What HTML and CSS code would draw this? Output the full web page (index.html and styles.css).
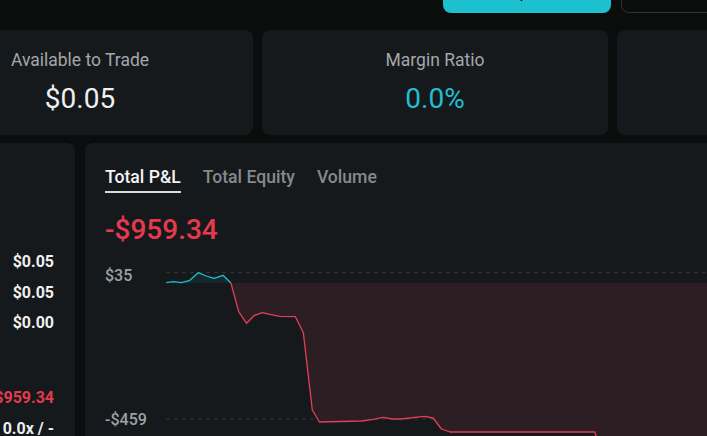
FILE: index.html
```html
<!DOCTYPE html>
<html lang="en">

<head>
    <meta charset="UTF-8">
    <meta name="viewport" content="width=device-width, initial-scale=1.0">
    <title>Portfolio</title>
    <link rel="stylesheet" href="styles.css">
</head>

<body>
    <div class="page">
        <header class="topbar">
            <button class="btn btn-primary">Deposit</button>
            <button class="btn btn-outline">Withdraw</button>
        </header>

        <section class="stats">
            <div class="stat">
                <div class="stat-label">Available to Trade</div>
                <div class="stat-value">$0.05</div>
            </div>
            <div class="stat">
                <div class="stat-label">Margin Ratio</div>
                <div class="stat-value teal">0.0%</div>
            </div>
            <div class="stat">
                <div class="stat-label">Leverage</div>
                <div class="stat-value">0.0x</div>
            </div>
        </section>

        <section class="main">
            <aside class="summary">
                <div class="summary-title">Account</div>
                <div class="row"><span>Equity</span><b>$0.05</b></div>
                <div class="row"><span>Balance</span><b>$0.05</b></div>
                <div class="row"><span>Margin</span><b>$0.00</b></div>
                <div class="summary-sub">Positions</div>
                <div class="row"><span>PnL</span><b class="red">-$959.34</b></div>
                <div class="row"><span>Lev.</span><b>0.0x / -</b></div>
            </aside>

            <div class="chart-card">
                <nav class="tabs">
                    <span class="tab active">Total P&amp;L</span>
                    <span class="tab">Total Equity</span>
                    <span class="tab">Volume</span>
                </nav>
                <div class="pnl red">-$959.34</div>

                <svg class="chart" width="620" height="200" viewBox="0 0 620 200">
                    <!-- grid -->
                    <line class="grid" x1="61" y1="22.7" x2="620" y2="22.7" />
                    <line class="grid" x1="61" y1="169" x2="620" y2="169" />
                    <text class="axis" x="0" y="30.5">$35</text>
                    <text class="axis" x="0" y="174.5">-$459</text>

                    <!-- fills -->
                    <polygon class="fill-up"
                        points="61.3,33 68.4,31.7 76.3,32.7 84.2,30.7 93.2,22.7 101.1,26 109,28.3 118,25.3 125.9,33" />
                    <polygon class="fill-down"
                        points="125.9,33 133.7,61.7 141.6,73.3 149.5,65.3 157.4,62.7 166,64.7 174.7,66.3 190.4,66.7 198.3,82.7 207.3,160 214.4,172 256.5,171 268.3,169.3 278.2,167.3 287.2,169 295.9,169 319.5,166.3 328.1,168 336.4,179 345,182 489.9,182 491,186 493,240 620,240 620,33" />

                    <!-- line -->
                    <polyline class="line-up"
                        points="61.3,32.7 68.4,31.7 76.3,32.7 84.2,30.7 93.2,22.7 101.1,26 109,28.3 118,25.3 125.9,33" />
                    <polyline class="line-down"
                        points="125.9,33 133.7,61.7 141.6,73.3 149.5,65.3 157.4,62.7 166,64.7 174.7,66.3 190.4,66.7 198.3,82.7 207.3,160 214.4,172 256.5,171 268.3,169.3 278.2,167.3 287.2,169 295.9,169 319.5,166.3 328.1,168 336.4,179 345,182 489.9,182 491,186 493,240" />
                </svg>
            </div>
        </section>
    </div>
</body>

</html>
```

FILE: styles.css
```css
html,
body {
    margin: 0;
    overflow: hidden;
}

body {
    background-color: #0b0c0c;
    font-family: Roboto, "Noto Sans", sans-serif;
    color: #eef0f1;
}

.page {
    width: 1200px;
    margin-left: -93px;
}

.topbar {
    display: flex;
    gap: 10px;
    height: 40px;
    margin-top: -27px;
    padding-left: 536px;
}

.btn {
    height: 40px;
    border-radius: 8px;
    font-family: inherit;
    font-size: 14px;
    font-weight: 500;
    cursor: pointer;
}

.btn-primary {
    width: 168px;
    border: none;
    background-color: #1dc0cf;
    color: #0b0c0c;
}

.btn-outline {
    width: 170px;
    border: 1px solid #303336;
    background-color: transparent;
    color: #eef0f1;
}

.stats {
    display: grid;
    grid-template-columns: repeat(3, 346px);
    gap: 9px;
    margin-top: 17px;
}

.stat {
    background-color: #16191c;
    border-radius: 8px;
    padding: 20px 0 21px;
    text-align: center;
}

.stat-label {
    font-size: 17.5px;
    line-height: 20px;
    color: #a3a7ab;
}

.stat-value {
    margin-top: 14px;
    font-size: 28px;
    line-height: 30px;
}

.teal {
    color: #1fbfd0;
}

.red {
    color: #e5394f;
}

.main {
    display: grid;
    grid-template-columns: 168px 1fr;
    gap: 10px;
    margin-top: 8px;
}

.summary {
    background-color: #16191c;
    border-radius: 8px;
    padding: 20px 21px;
    height: 400px;
}

.summary-title {
    font-size: 16px;
    line-height: 24px;
    margin-bottom: 60px;
}

.summary-sub {
    font-size: 14px;
    line-height: 20px;
    margin: 12px 0;
    color: #a3a7ab;
}

.row {
    display: flex;
    justify-content: space-between;
    padding: 5px 0;
    line-height: 20.7px;
    font-size: 16px;
}

.row span {
    color: #a3a7ab;
    font-size: 14px;
}

.row b {
    font-weight: 700;
}

.chart-card {
    background-color: #16191c;
    border-radius: 8px;
    padding: 24px 20px 0;
    height: 400px;
}

.tabs {
    display: flex;
    gap: 22px;
}

.tab {
    font-size: 17.6px;
    font-weight: 500;
    line-height: 20px;
    padding-bottom: 4px;
    border-bottom: 2px solid transparent;
    color: #85898d;
    cursor: pointer;
}

.tab.active {
    color: #f2f3f4;
    border-bottom-color: #d9dadb;
}

.pnl {
    margin-top: 20px;
    font-size: 28px;
    font-weight: 500;
    line-height: 34px;
}

.chart {
    display: block;
    margin-top: 3px;
}

.grid {
    stroke: #33373b;
    stroke-width: 1;
    stroke-dasharray: 4 4;
}

.axis {
    font-size: 16px;
    font-weight: 500;
    fill: #9da1a5;
}

.fill-up {
    fill: #14292d;
}

.fill-down {
    fill: #2d1e24;
}

.line-up,
.line-down {
    fill: none;
    stroke-width: 1.3;
    stroke-linejoin: round;
}

.line-up {
    stroke: #1fbfd0;
}

.line-down {
    stroke: #e23f58;
}
```
